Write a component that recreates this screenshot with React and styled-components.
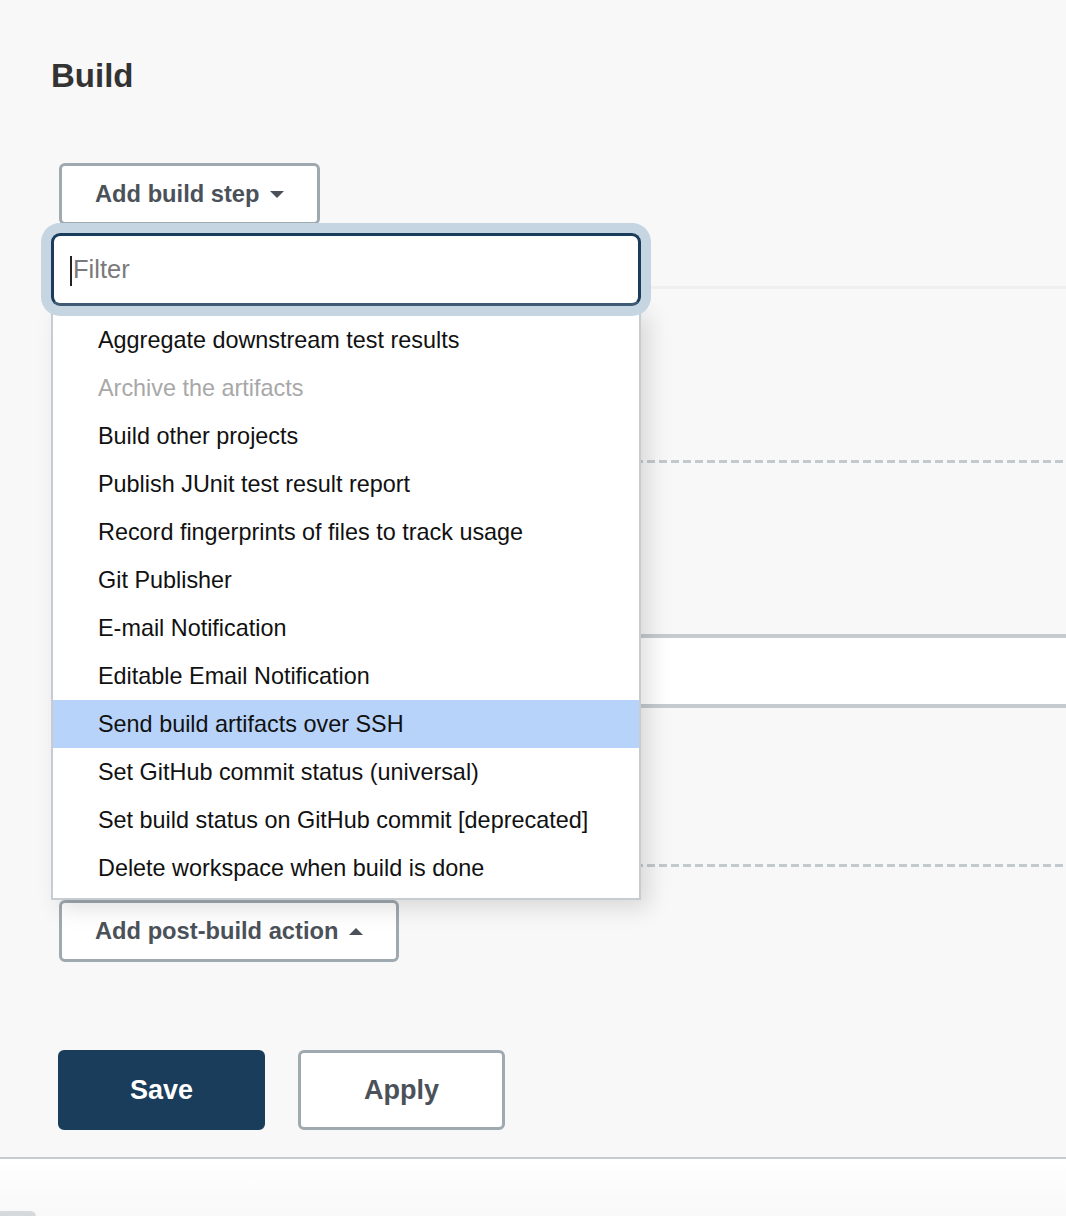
import React from "react"
import styled, { createGlobalStyle } from "styled-components"

const GlobalStyle = createGlobalStyle`
    html, body {
        margin: 0;
        padding: 0;
        background: #f8f8f8;
    }
    body {
        font-family: "Liberation Sans", Arial, Helvetica, sans-serif;
        color: #1a1a1a;
    }
`

const Page = styled.div`
    min-height: 1216px;
    display: flex;
    flex-direction: column;
    background: #f8f8f8;
    overflow: hidden;
`
const Main = styled.main`
    padding-top: 56px;
    display: flex;
    flex-direction: column;
`
const Heading = styled.h2`
    margin: 0 0 0 51px;
    font-size: 33px;
    line-height: 40px;
    font-weight: 700;
    color: #333;
`
const BuildArea = styled.section`
    position: relative;
    display: flex;
    flex-direction: column;
    align-items: flex-start;
    padding-left: 59px;
    margin-top: 67px;
`
const OutlineButton = styled.button`
    box-sizing: border-box;
    height: ${ p => p.tall ? '80px' : '62px' };
    min-width: ${ p => p.tall ? '207px' : 'auto' };
    padding: 0 33px;
    display: inline-flex;
    align-items: center;
    justify-content: center;
    gap: 11px;
    background: #fff;
    border: 3px solid #9fa9b0;
    border-radius: 6px;
    font-family: inherit;
    font-size: ${ p => p.tall ? '27px' : '23.7px' };
    font-weight: 700;
    color: #4b5159;
    cursor: pointer;
`
const PrimaryButton = styled(OutlineButton)`
    background: #1b3d5c;
    border-color: #1b3d5c;
    color: #fff;
`
const Caret = styled.span`
    width: 0;
    height: 0;
    border-left: 7px solid transparent;
    border-right: 7px solid transparent;
    ${ p => p.up ? 'border-bottom: 7px solid #4b5159;' : 'border-top: 7px solid #4b5159;' }
`
const Rule = styled.div`
    align-self: stretch;
    margin-top: ${ p => p.gap }px;
    height: ${ p => p.thick }px;
    background: ${ p => p.dashed
        ? 'repeating-linear-gradient(to right, #c3cacd 0 8px, transparent 8px 12px)'
        : p.color };
`
const Panel = styled.div`
    align-self: stretch;
    height: 66px;
    background: #fff;
`
const PostBuild = styled.div`
    margin-top: 33px;
`
const Actions = styled.div`
    display: flex;
    gap: 33px;
    margin-top: 88px;
    padding-left: 58px;
`
const Footer = styled.footer`
    margin-top: 27px;
    flex: 1;
    border-top: 2px solid #c5cbcf;
    background: linear-gradient(#fff, #f8f8f8);
    position: relative;
`
const FooterTab = styled.div`
    position: absolute;
    left: -4px;
    bottom: -6px;
    width: 40px;
    height: 11px;
    border-radius: 6px;
    background: #d6d9db;
`

/* dropdown that lies over the build section */
const Dropdown = styled.div`
    position: absolute;
    top: 70px;
    left: 51px;
    width: 590px;
    z-index: 5;
`
const FilterWrap = styled.div`
    position: relative;
    border-radius: 9px;
    box-shadow: 0 0 0 10px #c6d5e2;
`
const FilterInput = styled.input`
    box-sizing: border-box;
    display: block;
    width: 100%;
    height: 73px;
    padding: 0 0 0 19px;
    border: 3px solid #1b3d5c;
    border-bottom-color: #3e5a74;
    border-radius: 9px;
    background: #fff;
    font-family: inherit;
    font-size: 25.5px;
    color: #222;
    outline: none;
    &::placeholder {
        color: #7a7a7a;
    }
`
const TextCaret = styled.span`
    position: absolute;
    left: 19px;
    top: 23px;
    width: 2px;
    height: 30px;
    background: #222;
`
const Menu = styled.ul`
    list-style: none;
    margin: 0;
    padding: 10px 0 6px;
    background: #fff;
    border: 2px solid #c7ccd0;
    border-top: none;
    box-shadow: 8px 8px 22px rgba(0, 0, 0, 0.13);
`
const MenuItem = styled.li`
    height: 48px;
    display: flex;
    align-items: center;
    padding-left: 45px;
    font-size: 23.4px;
    color: ${ p => p.disabled ? '#a8a8a8' : '#111' };
    background: ${ p => p.active ? '#b8d3f9' : 'transparent' };
`

const items = [
    { label: 'Aggregate downstream test results' },
    { label: 'Archive the artifacts', disabled: true },
    { label: 'Build other projects' },
    { label: 'Publish JUnit test result report' },
    { label: 'Record fingerprints of files to track usage' },
    { label: 'Git Publisher' },
    { label: 'E-mail Notification' },
    { label: 'Editable Email Notification' },
    { label: 'Send build artifacts over SSH', active: true },
    { label: 'Set GitHub commit status (universal)' },
    { label: 'Set build status on GitHub commit [deprecated]' },
    { label: 'Delete workspace when build is done' },
]

const App = () => {
    return (
        <Page>
            <GlobalStyle />
            <Main>
                <Heading>Build</Heading>
                <BuildArea>
                    <OutlineButton>Add build step <Caret /></OutlineButton>
                    <Rule gap={ 61 } thick={ 3 } color="#efefef" />
                    <Rule gap={ 171 } thick={ 3 } dashed />
                    <Rule gap={ 171 } thick={ 4 } color="#c5cbcf" />
                    <Panel />
                    <Rule gap={ 0 } thick={ 4 } color="#c5cbcf" />
                    <Rule gap={ 156 } thick={ 3 } dashed />
                    <PostBuild>
                        <OutlineButton>Add post-build action <Caret up /></OutlineButton>
                    </PostBuild>

                    <Dropdown>
                        <FilterWrap>
                            <FilterInput placeholder="Filter" readOnly />
                            <TextCaret />
                        </FilterWrap>
                        <Menu>
                            { items.map(item => (
                                <MenuItem key={ item.label } disabled={ item.disabled } active={ item.active }>
                                    { item.label }
                                </MenuItem>
                            )) }
                        </Menu>
                    </Dropdown>
                </BuildArea>
                <Actions>
                    <PrimaryButton tall>Save</PrimaryButton>
                    <OutlineButton tall>Apply</OutlineButton>
                </Actions>
            </Main>
            <Footer>
                <FooterTab />
            </Footer>
        </Page>
    )
}

export default App
